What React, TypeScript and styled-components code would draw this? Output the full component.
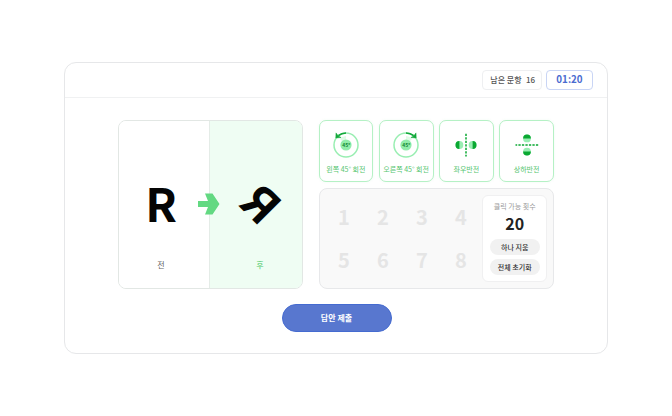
import React from 'react';
import styled, { createGlobalStyle } from 'styled-components';

const GlobalStyle = createGlobalStyle`
  * { box-sizing: border-box; }
  body { margin: 0; background: #fff; font-family: "Noto Sans CJK KR", "Noto Sans", sans-serif; }
  button { font-family: inherit; padding: 0; margin: 0; }
`;

const Page = styled.main`
  width: 672px;
  height: 416px;
  padding: 62px 64px;
  overflow: hidden;
`;

const Card = styled.section`
  width: 544px;
  height: 292px;
  border: 1px solid #e6e7e9;
  border-radius: 12px;
  background: #fff;
`;

const Header = styled.header`
  height: 35px;
  display: flex;
  justify-content: flex-end;
  align-items: center;
  gap: 4px;
  padding: 0 14px 0 0;
  border-bottom: 1px solid #f0f1f2;
`;

const Badge = styled.div<{ $timer?: boolean }>`
  width: ${(p) => (p.$timer ? 47 : 60)}px;
  height: 20px;
  display: flex;
  align-items: center;
  justify-content: center;
  gap: ${(p) => (p.$timer ? 0 : 4.5)}px;
  padding-left: ${(p) => (p.$timer ? 0 : 1.5)}px;
  border: 1px solid ${(p) => (p.$timer ? '#c9d5f5' : '#eeeff1')};
  border-radius: 4px;
  color: ${(p) => (p.$timer ? '#4a6bd0' : '#555')};
  font-size: ${(p) => (p.$timer ? 9.8 : 8)}px;
  font-weight: ${(p) => (p.$timer ? 700 : 500)};
  line-height: 1;
  white-space: nowrap;
`;

const Body = styled.div`
  display: flex;
  gap: 15.5px;
  padding: 21.5px 0 0 53px;
`;

const Preview = styled.div`
  position: relative;
  display: flex;
  width: 185px;
  height: 169.5px;
  border: 1px solid #e2e7e4;
  border-radius: 8px;
  overflow: hidden;
`;

const Pane = styled.div<{ $after?: boolean }>`
  flex: ${(p) => (p.$after ? '0 0 93px' : '1')};
  display: flex;
  flex-direction: column;
  align-items: center;
  padding: ${(p) => (p.$after ? '58px 0 0 8px' : '58px 6px 0 0')};
  background: ${(p) => (p.$after ? '#effdf3' : '#fff')};
  border-left: ${(p) => (p.$after ? '1px solid #e4ece7' : '0')};
`;

const Letter = styled.div<{ $turned?: boolean }>`
  width: 30px;
  height: 48px;
  line-height: 48px;
  text-align: center;
  font-size: 46.5px;
  font-weight: 700;
  color: #050505;
  transform: ${(p) => (p.$turned ? 'translate(3.5px, -0.3px) rotate(45deg) scaleX(-1)' : 'translate(-0.7px, -0.7px)')};
`;

const PaneLabel = styled.span<{ $green?: boolean }>`
  margin-top: 33px;
  font-size: 8px;
  line-height: 10px;
  color: ${(p) => (p.$green ? '#4dc96a' : '#666')};
`;

const Arrow = styled.svg`
  position: absolute;
  left: 78px;
  top: 72px;
`;

const Controls = styled.div`
  display: flex;
  flex-direction: column;
  gap: 6px;
  width: 235.5px;
`;

const Actions = styled.div`
  display: grid;
  grid-template-columns: repeat(4, 1fr);
  gap: 5.5px;
`;

const Action = styled.button`
  height: 62.5px;
  display: flex;
  flex-direction: column;
  align-items: center;
  padding-top: 8.5px;
  border: 1px solid #b5f1c5;
  border-radius: 7px;
  background: #fff;
  box-shadow: 0 0 3px rgba(80, 200, 110, 0.08);
  color: #55c56f;
  font-size: 7px;
  line-height: 10px;
  white-space: nowrap;
  svg { flex: none; margin-bottom: 3px; }
`;

const Board = styled.div`
  display: flex;
  height: 101px;
  padding: 6px 6.5px 6px 5px;
  border: 1px solid #e7e8ea;
  border-radius: 8px;
  background: #f9f9f9;
`;

const Slots = styled.div`
  flex: 1;
  display: grid;
  grid-template-columns: repeat(4, 39px);
  grid-template-rows: 43px 43px;
  place-items: center;
  color: #e5e5e5;
  font-size: 20px;
  font-weight: 700;
  line-height: 20px;
`;

const Summary = styled.div`
  width: 64.5px;
  height: 87px;
  display: flex;
  flex-direction: column;
  align-items: center;
  padding: 5px 0 0 1px;
  border: 1px solid #f0f0f1;
  border-radius: 6px;
  background: #fff;
`;

const SummaryLabel = styled.span`
  font-size: 7px;
  line-height: 10px;
  color: #999;
  white-space: nowrap;
`;

const SummaryCount = styled.strong`
  margin: 2.5px 0 7.5px;
  font-size: 16px;
  line-height: 18px;
  color: #222;
`;

const Pill = styled.button`
  width: 50px;
  height: 16px;
  flex: none;
  margin-bottom: 3.5px;
  border: 0;
  border-radius: 8px;
  background: #f1f1f1;
  color: #333;
  font-size: 7px;
  font-weight: 500;
  line-height: 16px;
`;

const Submit = styled.button`
  display: block;
  width: 110px;
  height: 28px;
  margin: 14.5px auto 0 216.5px;
  border: 1px solid #456bd0;
  border-radius: 14px;
  background: #5877cf;
  color: #fff;
  font-size: 8px;
  font-weight: 700;
  line-height: 25px;
`;

const RotateIcon = ({ right = false }: { right?: boolean }) => (
  <svg width="32" height="32" viewBox="0 0 32 32" fill="none">
    <circle cx="16" cy="16" r="12" stroke="#99eeb2" strokeWidth="1.5" />
    <g transform={right ? undefined : 'matrix(-1 0 0 1 32 0)'}>
      <path d="M16 16V7q4.5 .5 6 3Z" fill="#e0fbe7" />
      <path d="M16 4q4.5 .1 7.6 2.7" stroke="#12a83a" strokeWidth="1.6" />
      <path d="M26 3.9L26.2 9L20.9 8.5L23.6 7Z" fill="#12a83a" stroke="#12a83a" strokeWidth="0.5" />
    </g>
    <circle cx="16" cy="16" r="5.6" fill="#91edaa" />
    <text x="16.3" y="17.9" textAnchor="middle" fontSize="5" fontWeight="700" fill="#168a36">45°</text>
  </svg>
);

const FlipIcon = ({ vertical = false }: { vertical?: boolean }) => (
  <svg width="32" height="32" viewBox="0 0 32 32">
    <g transform={vertical ? 'rotate(90 16 16)' : undefined}>
      <path d="M16 4.8V27.5" stroke="#0aa832" strokeWidth="1.5" strokeDasharray="2.3 1.2" />
      <circle cx="9.4" cy="16" r="3.9" fill="#99eeb2" />
      <path d="M9.4 12.1a3.9 3.9 0 0 0 0 7.8Z" fill="#0aa832" />
      <circle cx="22.6" cy="16" r="3.9" fill="#99eeb2" />
      <path d="M22.6 12.1a3.9 3.9 0 0 1 0 7.8Z" fill="#0aa832" />
    </g>
  </svg>
);

export default function App() {
  return (
    <Page>
      <GlobalStyle />
      <Card>
        <Header>
          <Badge><span>남은 문항</span><span>16</span></Badge>
          <Badge $timer>01:20</Badge>
        </Header>
        <Body>
          <Preview>
            <Pane>
              <Letter>R</Letter>
              <PaneLabel>전</PaneLabel>
            </Pane>
            <Pane $after>
              <Letter $turned>R</Letter>
              <PaneLabel $green>후</PaneLabel>
            </Pane>
            <Arrow width="24" height="22" viewBox="0 0 24 22">
              <path d="M1 8H11L8 0.5H15.5L22.5 11L15.5 21.5H8L11 14H1Z" fill="#63d982" />
            </Arrow>
          </Preview>
          <Controls>
            <Actions>
              <Action><RotateIcon />왼쪽 45° 회전</Action>
              <Action><RotateIcon right />오른쪽 45° 회전</Action>
              <Action><FlipIcon />좌우반전</Action>
              <Action><FlipIcon vertical />상하반전</Action>
            </Actions>
            <Board>
              <Slots>
                {[1, 2, 3, 4, 5, 6, 7, 8].map((n) => <span key={n}>{n}</span>)}
              </Slots>
              <Summary>
                <SummaryLabel>클릭 가능 횟수</SummaryLabel>
                <SummaryCount>20</SummaryCount>
                <Pill>하나 지움</Pill>
                <Pill>전체 초기화</Pill>
              </Summary>
            </Board>
          </Controls>
        </Body>
        <Submit>답안 제출</Submit>
      </Card>
    </Page>
  );
}
